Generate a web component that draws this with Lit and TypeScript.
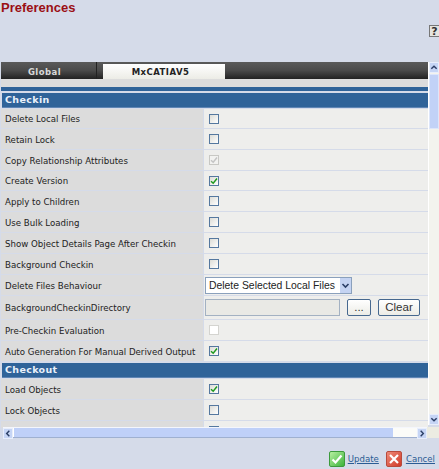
import { LitElement, html, css, svg } from "lit";
import { customElement } from "lit/decorators.js";

type Row = { label: string; h: number; kind: string };
const top: Row[] = [
  { label: "Delete Local Files", h: 19, kind: "empty" },
  { label: "Retain Lock", h: 20, kind: "empty" },
  { label: "Copy Relationship Attributes", h: 20, kind: "disabled" },
  { label: "Create Version", h: 19, kind: "checked" },
  { label: "Apply to Children", h: 20, kind: "empty" },
  { label: "Use Bulk Loading", h: 20, kind: "empty" },
  { label: "Show Object Details Page After Checkin", h: 20, kind: "empty" },
  { label: "Background Checkin", h: 20, kind: "empty" },
  { label: "Delete Files Behaviour", h: 20, kind: "select" },
  { label: "BackgroundCheckinDirectory", h: 23, kind: "dir" },
  { label: "Pre-Checkin Evaluation", h: 20, kind: "blank" },
  { label: "Auto Generation For Manual Derived Output", h: 20, kind: "checked" },
];
const bottom: Row[] = [
  { label: "Load Objects", h: 20, kind: "checked" },
  { label: "Lock Objects", h: 20, kind: "empty" },
  { label: "", h: 20, kind: "empty" },
];

const chev = (d: string) => svg`<svg width="9" height="9" viewBox="0 0 9 9"><path d=${d} fill="none" stroke="#2b3f66" stroke-width="1.6"/></svg>`;

@customElement("app-root")
export class AppRoot extends LitElement {
  static styles = css`
    :host { display: block; width: 439px; height: 469px; background: #d5dbe9; overflow: hidden; font-family: "DejaVu Sans", sans-serif; }
    .head { height: 62px; display: flex; flex-direction: column; position: relative; }
    .title { font: bold 13px/13px "Liberation Sans", sans-serif; color: #9b0f14; padding: 1px 0 0 1px; }
    .help { position: absolute; right: 0; top: 25px; width: 10px; height: 12px; background: #e4e4e0; border: 1px solid #777; border-right: 0; font: bold 11px/12px "DejaVu Sans", sans-serif; color: #333; text-align: center; box-sizing: border-box; }
    .mid { display: flex; height: 366px; }
    .main { width: 428px; padding-left: 1px; box-sizing: border-box; overflow: hidden; display: flex; flex-direction: column; background: #d5dbe9; }
    .tabs { height: 17px; flex: none; background: linear-gradient(#5a5a5a, #4a4a4a 50%, #222); display: flex; align-items: flex-end; }
    .tab { font: bold 8.5px/15px "DejaVu Sans", sans-serif; text-align: center; letter-spacing: .45px; }
    .tab.off { width: 96px; color: #d8d8d8; height: 17px; line-height: 21px; border-right: 1px solid #222; margin-right: 6px; padding-right: 8px; box-sizing: border-box; }
    .tab.on { width: 122px; height: 15px; line-height: 17px; background: linear-gradient(#fff, #ecece6); color: #222; padding-right: 7px; box-sizing: border-box; }
    .strip { height: 8px; flex: none; background: #dcdcdc; }
    .rule { height: 4px; flex: none; background: #2f6399; margin-bottom: 2px; }
    .section { height: 14px; flex: none; margin: 0 0 1px 1px; background: #2f6399; color: #e8f0fa; font: bold 9.5px/14px "DejaVu Sans", sans-serif; padding-left: 3px; letter-spacing: .35px; border-bottom: 1px solid #5f86b5; box-sizing: content-box; }
    .row + .section { margin-top: 1px; }
    .row { flex: none; display: grid; grid-template-columns: 202px 1fr; margin-bottom: 1px; }
    .label { background: #dcdcdc; font-size: 8.65px; color: #222; padding: 1px 0 0 4px; box-sizing: border-box; display: flex; align-items: center; white-space: nowrap; }
    .value { background: #eeeeec; margin-left: 1px; padding-left: 5px; display: flex; align-items: center; gap: 7px; }
    .box { width: 10px; height: 10px; box-sizing: border-box; border: 1px solid #55789f; background: linear-gradient(135deg, #dcdcd6, #fff); display: flex; align-items: center; justify-content: center; }
    .box.disabled { border-color: #c8c8c4; background: #f2f2f0; }
    .box.blank { border-color: #d4d4d0; background: #fff; }
    .select { margin-left: -4px; width: 147px; height: 17px; box-sizing: border-box; border: 1px solid #8aa0bc; background: #fff; font: 10.4px/15px "Liberation Sans", sans-serif; color: #222; padding-left: 3px; display: flex; justify-content: space-between; align-items: center; white-space: nowrap; }
    .arrow { width: 11px; height: 15px; background: #c4d3f2; display: flex; align-items: center; justify-content: center; flex: none; }
    .input { margin-left: -4px; width: 135px; height: 17px; box-sizing: border-box; background: #e9e9e5; border: 1px solid #a3b1c2; }
    .btn { height: 17px; box-sizing: border-box; border: 1px solid #46688f; border-radius: 2px; background: linear-gradient(#fff, #ecece6); font: 11.5px/15px "Liberation Sans", sans-serif; color: #333; text-align: center; }
    .btn.dots { width: 24px; }
    .btn.clear { width: 42px; }
    .vbar { width: 11px; height: 363px; padding-right: 1px; box-sizing: border-box; display: flex; flex-direction: column; background: #f3f3ee; border-left: 1px solid #fff; }
    .sbtn { flex: none; width: 10px; height: 11px; background: #c6d5f5; border: 1px solid #e8eefb; box-sizing: border-box; display: flex; align-items: center; justify-content: center; }
    .vthumb { width: 10px; height: 55px; background: #c2d2f7; border: 1px solid #dde6fa; box-sizing: border-box; margin-top: 1px; }
    .vtrack { flex: 1; }
    .hbar { height: 11px; margin-top: -1px; display: flex; padding-left: 3px; }
    .hinner { width: 424px; display: flex; background: #fff; border-top: 1px solid #f4f6fc; border-bottom: 1px solid #9fb0d0; box-sizing: border-box; }
    .hthumb { width: 379px; background: #bfd0f8; border-left: 1px solid #fff; }
    .htrack { flex: 1; background: #fbfbf8; }
    .corner { width: 12px; background: #ecece2; }
    .foot { height: 30px; display: flex; align-items: center; justify-content: flex-end; padding: 11px 4px 0 0; box-sizing: border-box; }
    .act { display: flex; align-items: center; gap: 4px; margin-left: 7px; color: #2b5c94; text-decoration: underline; font: 8.6px/14px "DejaVu Sans", sans-serif; }
    .act.update { gap: 3px; }
    .ico { width: 16px; height: 16px; border-radius: 2px; display: flex; align-items: center; justify-content: center; box-sizing: border-box; }
    .ico.ok { background: linear-gradient(135deg, #b7f0a0, #3cb33c); border: 1px solid #3c9a3c; }
    .ico.no { background: linear-gradient(135deg, #ee8a78, #d03a28); border: 1px solid #b84a3c; }
  `;

  private box(kind: string) {
    const check = kind === "checked" || kind === "disabled";
    const col = kind === "checked" ? "#1f9a1f" : "#c4c4c4";
    return html`<div class="box ${kind}">${check
      ? svg`<svg width="8" height="8" viewBox="0 0 8 8"><path d="M1 4.2 3.2 6.2 7 1.6" fill="none" stroke=${col} stroke-width="1.5"/></svg>`
      : ""}</div>`;
  }

  private control(r: Row) {
    if (r.kind === "select")
      return html`<div class="select">Delete Selected Local Files<span class="arrow">${chev("M1.5 3 4.5 6 7.5 3")}</span></div>`;
    if (r.kind === "dir")
      return html`<div class="input"></div><div class="btn dots">...</div><div class="btn clear">Clear</div>`;
    return this.box(r.kind);
  }

  private rows(list: Row[]) {
    return list.map(
      (r) => html`<div class="row" style="height:${r.h}px"><div class="label">${r.label}</div><div class="value">${this.control(r)}</div></div>`
    );
  }

  render() {
    return html`
      <div class="head"><div class="title">Preferences</div><div class="help">?</div></div>
      <div class="mid">
        <div class="main">
          <div class="tabs"><div class="tab off">Global</div><div class="tab on">MxCATIAV5</div></div>
          <div class="strip"></div>
          <div class="rule"></div>
          <div class="section">Checkin</div>
          ${this.rows(top)}
          <div class="section">Checkout</div>
          ${this.rows(bottom)}
        </div>
        <div class="vbar">
          <div class="sbtn">${chev("M1.5 6 4.5 3 7.5 6")}</div>
          <div class="vthumb"></div>
          <div class="vtrack"></div>
          <div class="sbtn">${chev("M1.5 3 4.5 6 7.5 3")}</div>
        </div>
      </div>
      <div class="hbar">
        <div class="hinner">
          <div class="sbtn">${chev("M6 1.5 3 4.5 6 7.5")}</div>
          <div class="hthumb"></div>
          <div class="htrack"></div>
          <div class="sbtn">${chev("M3 1.5 6 4.5 3 7.5")}</div>
        </div>
        <div class="corner"></div>
      </div>
      <div class="foot">
        <div class="act update"><span class="ico ok"><svg width="12" height="12" viewBox="0 0 12 12"><path d="M1.5 6.5 4.5 9.5 10.5 2.5" fill="none" stroke="#fff" stroke-width="2.2"/></svg></span>Update</div>
        <div class="act"><span class="ico no"><svg width="12" height="12" viewBox="0 0 12 12"><path d="M2 2 10 10M10 2 2 10" fill="none" stroke="#fff" stroke-width="2.2"/></svg></span>Cancel</div>
      </div>
    `;
  }
}
